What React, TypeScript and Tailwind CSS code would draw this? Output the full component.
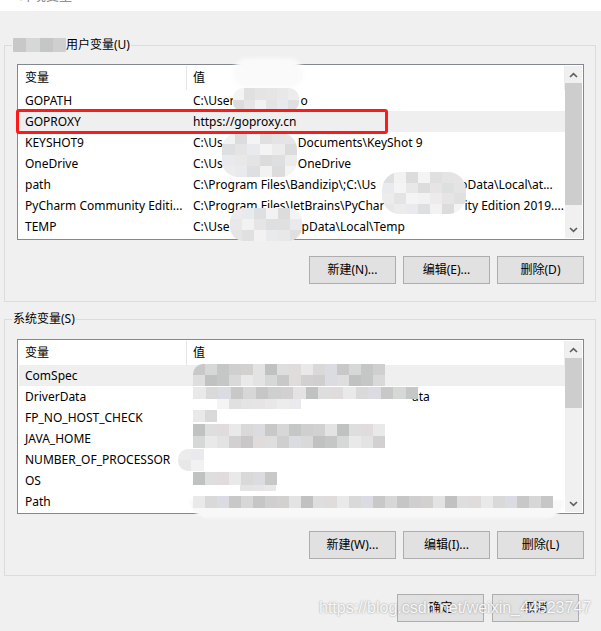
import React from "react";

const FONT = "font-['Noto_Sans','Noto_Sans_CJK_SC',sans-serif]";

const PAL = [
  "#cfcfcf", "#d9d9d9", "#e3e3e3", "#c8c8c8", "#dedede", "#c5c7c7",
  "#e9e9e9", "#d3d0d0", "#dadce1", "#c0c2c2", "#d6d8d6", "#e0dcdc",
];
const PAL_LIGHT = [
  "#e4e4e4", "#ececec", "#f2f2f2", "#e0e0e0", "#e8e8e8", "#dedfe0",
  "#f4f4f4", "#e6e4e4", "#e8eaee", "#dcdcdc",
];

function Mosaic({
  cols,
  rows,
  cellCls,
  seed,
  light,
}: {
  cols: number;
  rows: number;
  cellCls: string;
  seed: number;
  light?: boolean;
}) {
  const pal = light ? PAL_LIGHT : PAL;
  const out: React.ReactNode[] = [];
  for (let r = 0; r < rows; r++) {
    const line: React.ReactNode[] = [];
    for (let c = 0; c < cols; c++) {
      const idx = (c * 7 + r * 13 + seed * 5 + ((c * r + seed) % 3)) % pal.length;
      line.push(
        <div key={c} className={`${cellCls} shrink-0`} style={{ backgroundColor: pal[idx] }} />
      );
    }
    out.push(
      <div key={r} className="flex">
        {line}
      </div>
    );
  }
  return <div className="flex flex-col">{out}</div>;
}

function Chevron({ up }: { up?: boolean }) {
  return (
    <svg width="9" height="6" viewBox="0 0 9 6" className={up ? "" : "rotate-180"}>
      <path d="M1 5 L4.5 1.6 L8 5" fill="none" stroke="#606060" strokeWidth="1.7" />
    </svg>
  );
}

type Row = { name: string; value: React.ReactNode };

function ListView({
  rows,
  selected,
  heightCls,
  thumbCls,
}: {
  rows: Row[];
  selected: number;
  heightCls: string;
  thumbCls: string;
}) {
  return (
    <div className={`ml-[12px] w-[567px] ${heightCls} border border-[#828790] bg-white p-px flex`}>
      <div className="w-[546px] flex flex-col overflow-hidden">
        <div className="h-[24px] flex items-stretch shrink-0 border-r border-[#ececec]">
          <div className="w-[168px] border-r border-[#e5e5e5] pl-[6px] flex items-center">变量</div>
          <div className="pl-[6px] flex items-center">值</div>
        </div>
        {rows.map((r, i) => (
          <div
            key={r.name}
            className={`h-[21px] shrink-0 flex items-center whitespace-nowrap ${i === selected ? "bg-[#efefef]" : ""}`}
          >
            <div className="w-[168px] shrink-0 pl-[6px]">{r.name}</div>
            <div className="pl-[6px] overflow-hidden flex items-center">{r.value}</div>
          </div>
        ))}
      </div>
      <div className="w-[17px] bg-[#f0f0f0] flex flex-col">
        <div className="h-[17px] flex items-center justify-center">
          <Chevron up />
        </div>
        <div className={`${thumbCls} bg-[#cdcdcd]`} />
        <div className="flex-1" />
        <div className="h-[17px] flex items-center justify-center">
          <Chevron />
        </div>
      </div>
    </div>
  );
}

function Btn({ label, cls }: { label: string; cls: string }) {
  return (
    <div
      className={`${cls} h-[28px] border border-[#adadad] bg-[#e1e1e1] flex items-center justify-center text-[12px] text-black`}
    >
      {label}
    </div>
  );
}

function Gap({ cls }: { cls: string }) {
  return <span className={`inline-block shrink-0 ${cls}`} />;
}

const userRows: Row[] = [
  {
    name: "GOPATH",
    value: (
      <>
        <span>C:\User</span>
        <Gap cls="w-[66px]" />
        <span>o</span>
      </>
    ),
  },
  { name: "GOPROXY", value: "https://goproxy.cn" },
  {
    name: "KEYSHOT9",
    value: (
      <>
        <span>C:\Us</span>
        <Gap cls="w-[75px]" />
        <span>Documents\KeyShot 9</span>
      </>
    ),
  },
  {
    name: "OneDrive",
    value: (
      <>
        <span>C:\Us</span>
        <Gap cls="w-[75px]" />
        <span>OneDrive</span>
      </>
    ),
  },
  {
    name: "path",
    value: (
      <>
        <span>C:\Program Files\Bandizip\;C:\Us</span>
        <Gap cls="w-[84px]" />
        <span>pData\Local\at...</span>
      </>
    ),
  },
  {
    name: "PyCharm Community Editi...",
    value: (
      <>
        <span>C:\Program Files\JetBrains\PyChar</span>
        <Gap cls="w-[80px]" />
        <span>ity Edition 2019....</span>
      </>
    ),
  },
  {
    name: "TEMP",
    value: (
      <>
        <span>C:\Use</span>
        <Gap cls="w-[72px]" />
        <span>pData\Local\Temp</span>
      </>
    ),
  },
];

const sysRows: Row[] = [
  { name: "ComSpec", value: "" },
  {
    name: "DriverData",
    value: (
      <>
        <Gap cls="w-[219px]" />
        <span>ata</span>
      </>
    ),
  },
  { name: "FP_NO_HOST_CHECK", value: "" },
  { name: "JAVA_HOME", value: "" },
  { name: "NUMBER_OF_PROCESSOR", value: "" },
  { name: "OS", value: "" },
  { name: "Path", value: "" },
];

type Blob = { cls: string; cols: number; rows: number; cell: string; seed: number; light?: boolean };

const blobs: Blob[] = [
  { cls: "left-[233px] top-[88px] rounded-[10px] blur-[0.6px]", cols: 6, rows: 2, cell: "w-[11px] h-[12px]", seed: 1, light: true },
  { cls: "left-[222px] top-[133px] rounded-[16px] blur-[0.6px]", cols: 6, rows: 4, cell: "w-[12.5px] h-[11px]", seed: 2, light: true },
  { cls: "left-[382px] top-[172px] rounded-[18px] blur-[0.6px]", cols: 7, rows: 4, cell: "w-[12px] h-[10.5px]", seed: 3, light: true },
  { cls: "left-[230px] top-[208px] rounded-[14px] blur-[0.6px]", cols: 6, rows: 3, cell: "w-[12px] h-[11px]", seed: 4, light: true },
  { cls: "left-[193px] top-[364px] rounded-tl-[10px] blur-[0.5px]", cols: 16, rows: 2, cell: "w-[12px] h-[11px]", seed: 5 },
  { cls: "left-[193px] top-[387px] blur-[0.5px]", cols: 18, rows: 1, cell: "w-[12.5px] h-[12px]", seed: 6 },
  { cls: "left-[217px] top-[399px] blur-[0.5px]", cols: 7, rows: 1, cell: "w-[12px] h-[10px]", seed: 7, light: true },
  { cls: "left-[193px] top-[410px] blur-[0.5px]", cols: 2, rows: 1, cell: "w-[12px] h-[12px]", seed: 8 },
  { cls: "left-[193px] top-[424px] blur-[0.5px]", cols: 16, rows: 2, cell: "w-[12px] h-[12px]", seed: 9 },
  { cls: "left-[178px] top-[449px] rounded-l-[10px] blur-[0.6px]", cols: 2, rows: 2, cell: "w-[13px] h-[11px]", seed: 10, light: true },
  { cls: "left-[193px] top-[472px] blur-[0.5px]", cols: 7, rows: 1, cell: "w-[12px] h-[13px]", seed: 11 },
  { cls: "left-[240px] top-[485px] blur-[0.5px]", cols: 3, rows: 1, cell: "w-[12px] h-[6px]", seed: 12, light: true },
  { cls: "left-[193px] top-[496px] blur-[0.5px]", cols: 30, rows: 1, cell: "w-[12px] h-[12px]", seed: 13 },
];

export default function App() {
  return (
    <div className={`${FONT} relative w-[601px] h-[631px] bg-[#f0f0f0] text-[12px] leading-[16px] text-black overflow-hidden flex flex-col`}>
      <div className="h-[11px] bg-white overflow-hidden shrink-0">
        <div className="pl-[20px] -translate-y-[13px] text-[#7a7a7a] text-[13px]">环境变量</div>
      </div>

      {/* User variables */}
      <fieldset className="mt-[26px] ml-[4px] w-[592px] border border-[#dcdcdc] pb-[17px]">
        <legend className="ml-[7px] px-px leading-[16px] flex items-center">
          <span className="inline-flex items-center h-[16px] overflow-hidden rounded-[3px] blur-[0.5px]">
            <Mosaic cols={4} rows={1} cellCls="w-[13.25px] h-[14px]" seed={3} />
          </span>
          <span>用户变量(U)</span>
        </legend>
        <div className="mt-[11px]">
          <ListView rows={userRows} selected={1} heightCls="h-[176px]" thumbCls="h-[122px]" />
        </div>
        <div className="mt-[16px] w-[579px] flex justify-end gap-[7px]">
          <Btn label="新建(N)..." cls="w-[87px]" />
          <Btn label="编辑(E)..." cls="w-[87px]" />
          <Btn label="删除(D)" cls="w-[87px]" />
        </div>
      </fieldset>

      {/* System variables */}
      <fieldset className="mt-[9px] ml-[4px] w-[592px] border border-[#dcdcdc] pb-[16px]">
        <legend className="ml-[7px] px-px leading-[16px]">系统变量(S)</legend>
        <div className="mt-[12px]">
          <ListView rows={sysRows} selected={0} heightCls="h-[175px]" thumbCls="h-[50px]" />
        </div>
        <div className="mt-[17px] w-[579px] flex justify-end gap-[7px]">
          <Btn label="新建(W)..." cls="w-[87px]" />
          <Btn label="编辑(I)..." cls="w-[87px]" />
          <Btn label="删除(L)" cls="w-[87px]" />
        </div>
      </fieldset>

      <div className="mt-[18px] pr-[22px] flex justify-end gap-[8px]">
        <Btn label="确定" cls="w-[87px]" />
        <Btn label="取消" cls="w-[87px]" />
      </div>

      {/* overlays: privacy blur, highlight box, watermark */}
      <div className="absolute inset-0 pointer-events-none">
        <div className="absolute left-[233px] top-[58px] w-[70px] h-[30px] rounded-full bg-[#fafafa] blur-[2px]" />
        <div className="absolute left-[190px] top-[500px] w-[374px] h-[18px] rounded-b-[40px] bg-[#f8f8f8] blur-[1px]" />
        {blobs.map((b, i) => (
          <div key={i} className={`absolute overflow-hidden ${b.cls}`}>
            <Mosaic cols={b.cols} rows={b.rows} cellCls={b.cell} seed={b.seed} light={b.light} />
          </div>
        ))}
        <div className="absolute left-[16px] top-[109px] w-[372px] h-[25px] border-[3px] border-[#ff1a1a] rounded-[3px]" />
        <div className="absolute left-[319px] top-[598px] font-['Liberation_Sans',sans-serif] text-[16px] leading-[20px] text-white/90 [text-shadow:0_0_2px_#8a8a8a] whitespace-nowrap">
          https://blog.csdn.net/weixin_44523747
        </div>
      </div>
    </div>
  );
}
